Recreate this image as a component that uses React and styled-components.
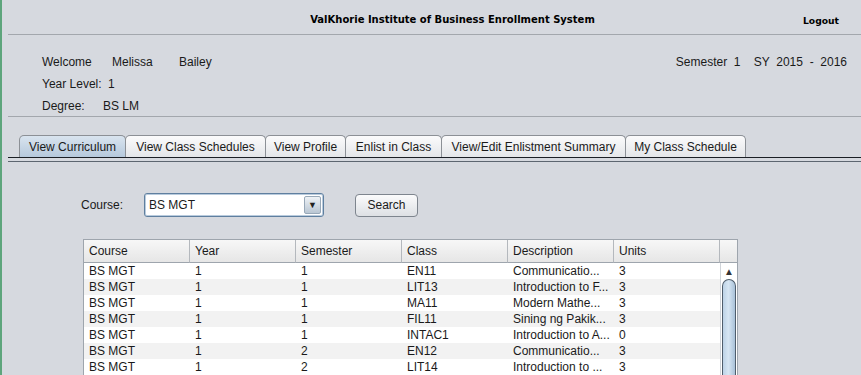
import React from "react";
import styled, { createGlobalStyle } from "styled-components";

const GlobalStyle = createGlobalStyle`
  body {
    margin: 0;
    font-family: "Liberation Sans", Arial, sans-serif;
    font-size: 12px;
    color: #1a1a1a;
  }
`;

export const Window = styled.div`
  width: 861px;
  height: 375px;
  overflow: hidden;
  background: #d6d9df;
  border-left: 2px solid #5ea57c;
  box-sizing: border-box;
  display: flex;
  flex-direction: column;
`;

export const TitleBar = styled.header`
  height: 34px;
  margin-left: 6px;
  border-bottom: 1px solid #a3a7ad;
  display: flex;
  align-items: center;
  font-family: "DejaVu Sans", sans-serif;
  font-weight: bold;
  font-size: 10px;
  color: #000;
`;

export const Title = styled.div`
  flex: 1;
  text-align: center;
  padding-left: 94px;
  margin-top: 4px;
`;

export const Logout = styled.div`
  width: 58px;
  margin-top: 6px;
  font-size: 9.2px;
`;

export const InfoPanel = styled.section`
  height: 82px;
  margin-left: 6px;
  border-bottom: 1px solid #a3a7ad;
  display: flex;
  justify-content: space-between;
  padding: 20px 14px 0 34px;
  box-sizing: border-box;
`;

export const InfoColumn = styled.div`
  display: flex;
  flex-direction: column;
  gap: 8px;
`;

export const InfoRow = styled.div`
  display: flex;
  height: 14px;
  line-height: 14px;
  white-space: pre;
`;

export const InfoValue = styled.span`
  width: ${(p) => p.w}px;
`;

export const TabStrip = styled.nav`
  margin-top: 18px;
  margin-left: 6px;
  padding-left: 11px;
  height: 22px;
  display: flex;
  align-items: flex-end;
  border-bottom: 1px solid #1b1f25;
`;

export const Tab = styled.div`
  width: ${(p) => p.w}px;
  box-sizing: border-box;
  height: 22px;
  display: flex;
  align-items: center;
  justify-content: center;
  border: 1px solid #8c9096;
  border-bottom: none;
  border-radius: 5px 5px 0 0;
  margin-right: -1px;
  color: #1a1a1a;
  background: ${(p) =>
    p.active
      ? "linear-gradient(#d9e4ef, #b6c9dc)"
      : "linear-gradient(#fbfbfc, #e4e6e9)"};
`;

export const ContentRule = styled.div`
  margin-left: 6px;
  height: 3px;
  border-bottom: 1px solid #5d6670;
`;

export const Content = styled.main`
  flex: 1;
  padding: 31px 0 0 79px;
  display: flex;
  flex-direction: column;
`;

export const SearchRow = styled.div`
  display: flex;
  align-items: center;
  height: 24px;
`;

export const Label = styled.span`
  width: 63px;
`;

export const Combo = styled.div`
  width: 180px;
  height: 24px;
  box-sizing: border-box;
  border: 1px solid #5f7f9f;
  border-radius: 3px;
  background: #fff;
  display: flex;
  align-items: center;
  padding-left: 4px;
  box-shadow: inset 0 0 0 1px #b9cbdd;
`;

export const ComboText = styled.span`
  flex: 1;
`;

export const ComboArrow = styled.div`
  width: 17px;
  height: 18px;
  margin-right: 2px;
  border-radius: 2px;
  background: linear-gradient(#eef2f6, #b9c6d3);
  border: 1px solid #98a8b8;
  box-sizing: border-box;
  display: flex;
  align-items: center;
  justify-content: center;
  font-size: 9px;
  color: #222;
`;

export const Button = styled.button`
  margin-left: 31px;
  width: 63px;
  height: 23px;
  border: 1px solid #7e858e;
  border-radius: 4px;
  background: linear-gradient(#fbfbfc, #dde0e4);
  font-family: "Liberation Sans", Arial, sans-serif;
  font-size: 12px;
  color: #1a1a1a;
  padding: 0;
`;

export const Table = styled.div`
  margin-top: 22px;
  margin-left: 2px;
  width: 653px;
  border: 1px solid #9ea5ad;
  border-bottom: none;
  display: grid;
  grid-template-columns: repeat(6, 106px) 1fr;
  grid-template-rows: 23px;
  grid-auto-rows: 16px;
  background: #fff;
`;

export const HeadCell = styled.div`
  background: linear-gradient(#f7f7f7, #e6e6e6);
  border-right: 1px solid #b4b8bd;
  border-bottom: 1px solid #9ea5ad;
  padding-left: 5px;
  display: flex;
  align-items: center;
  &:nth-child(7) {
    border-right: none;
  }
`;

export const Cell = styled.div`
  padding-left: 5px;
  line-height: 16px;
  white-space: nowrap;
  overflow: hidden;
  background: ${(p) => (p.odd ? "#f2f2f2" : "#fff")};
`;

export const ScrollTrack = styled.div`
  grid-column: 7;
  grid-row: 2 / span 7;
  display: flex;
  flex-direction: column;
  border-left: 1px solid #d0d4d9;
  background: #fff;
`;

export const ScrollUp = styled.div`
  height: 16px;
  display: flex;
  align-items: center;
  justify-content: center;
  font-size: 10px;
  color: #333;
`;

export const Thumb = styled.div`
  flex: 1;
  margin: 0 1px;
  border: 1px solid #4f5d6b;
  border-bottom: none;
  border-radius: 7px 7px 0 0;
  background: linear-gradient(90deg, #bcd2e6, #d7e6f3 45%, #a9c1d8);
`;

const rows = [
  ["BS MGT", "1", "1", "EN11", "Communicatio...", "3"],
  ["BS MGT", "1", "1", "LIT13", "Introduction to F...", "3"],
  ["BS MGT", "1", "1", "MA11", "Modern Mathe...", "3"],
  ["BS MGT", "1", "1", "FIL11", "Sining ng Pakik...", "3"],
  ["BS MGT", "1", "1", "INTAC1", "Introduction to A...", "0"],
  ["BS MGT", "1", "2", "EN12", "Communicatio...", "3"],
  ["BS MGT", "1", "2", "LIT14", "Introduction to ...", "3"],
];

const tabs = [
  ["View Curriculum", 107],
  ["View Class Schedules", 141],
  ["View Profile", 81],
  ["Enlist in Class", 97],
  ["View/Edit Enlistment Summary", 185],
  ["My Class Schedule", 121],
];

export default function App() {
  return (
    <>
      <GlobalStyle />
      <Window>
        <TitleBar>
          <Title>ValKhorie Institute of Business Enrollment System</Title>
          <Logout>Logout</Logout>
        </TitleBar>
        <InfoPanel>
          <InfoColumn>
            <InfoRow>
              <InfoValue w={70}>Welcome</InfoValue>
              <InfoValue w={67}>Melissa</InfoValue>
              <InfoValue w={50}>Bailey</InfoValue>
            </InfoRow>
            <InfoRow>
              <InfoValue w={66}>Year Level:</InfoValue>
              <InfoValue w={20}>1</InfoValue>
            </InfoRow>
            <InfoRow>
              <InfoValue w={61}>Degree:</InfoValue>
              <InfoValue w={50}>BS LM</InfoValue>
            </InfoRow>
          </InfoColumn>
          <InfoRow>Semester  1    SY  2015  -  2016</InfoRow>
        </InfoPanel>
        <TabStrip>
          {tabs.map(([t, w], i) => (
            <Tab key={t} w={w} active={i === 0}>
              {t}
            </Tab>
          ))}
        </TabStrip>
        <ContentRule />
        <Content>
          <SearchRow>
            <Label>Course:</Label>
            <Combo>
              <ComboText>BS MGT</ComboText>
              <ComboArrow>▼</ComboArrow>
            </Combo>
            <Button>Search</Button>
          </SearchRow>
          <Table>
            {["Course", "Year", "Semester", "Class", "Description", "Units", ""].map(
              (h, i) => (
                <HeadCell key={i}>{h}</HeadCell>
              )
            )}
            {rows.map((r, ri) =>
              r.map((c, ci) => (
                <Cell key={ri + "-" + ci} odd={ri % 2 === 1}>
                  {c}
                </Cell>
              ))
            )}
            <ScrollTrack>
              <ScrollUp>▲</ScrollUp>
              <Thumb />
            </ScrollTrack>
          </Table>
        </Content>
      </Window>
    </>
  );
}
